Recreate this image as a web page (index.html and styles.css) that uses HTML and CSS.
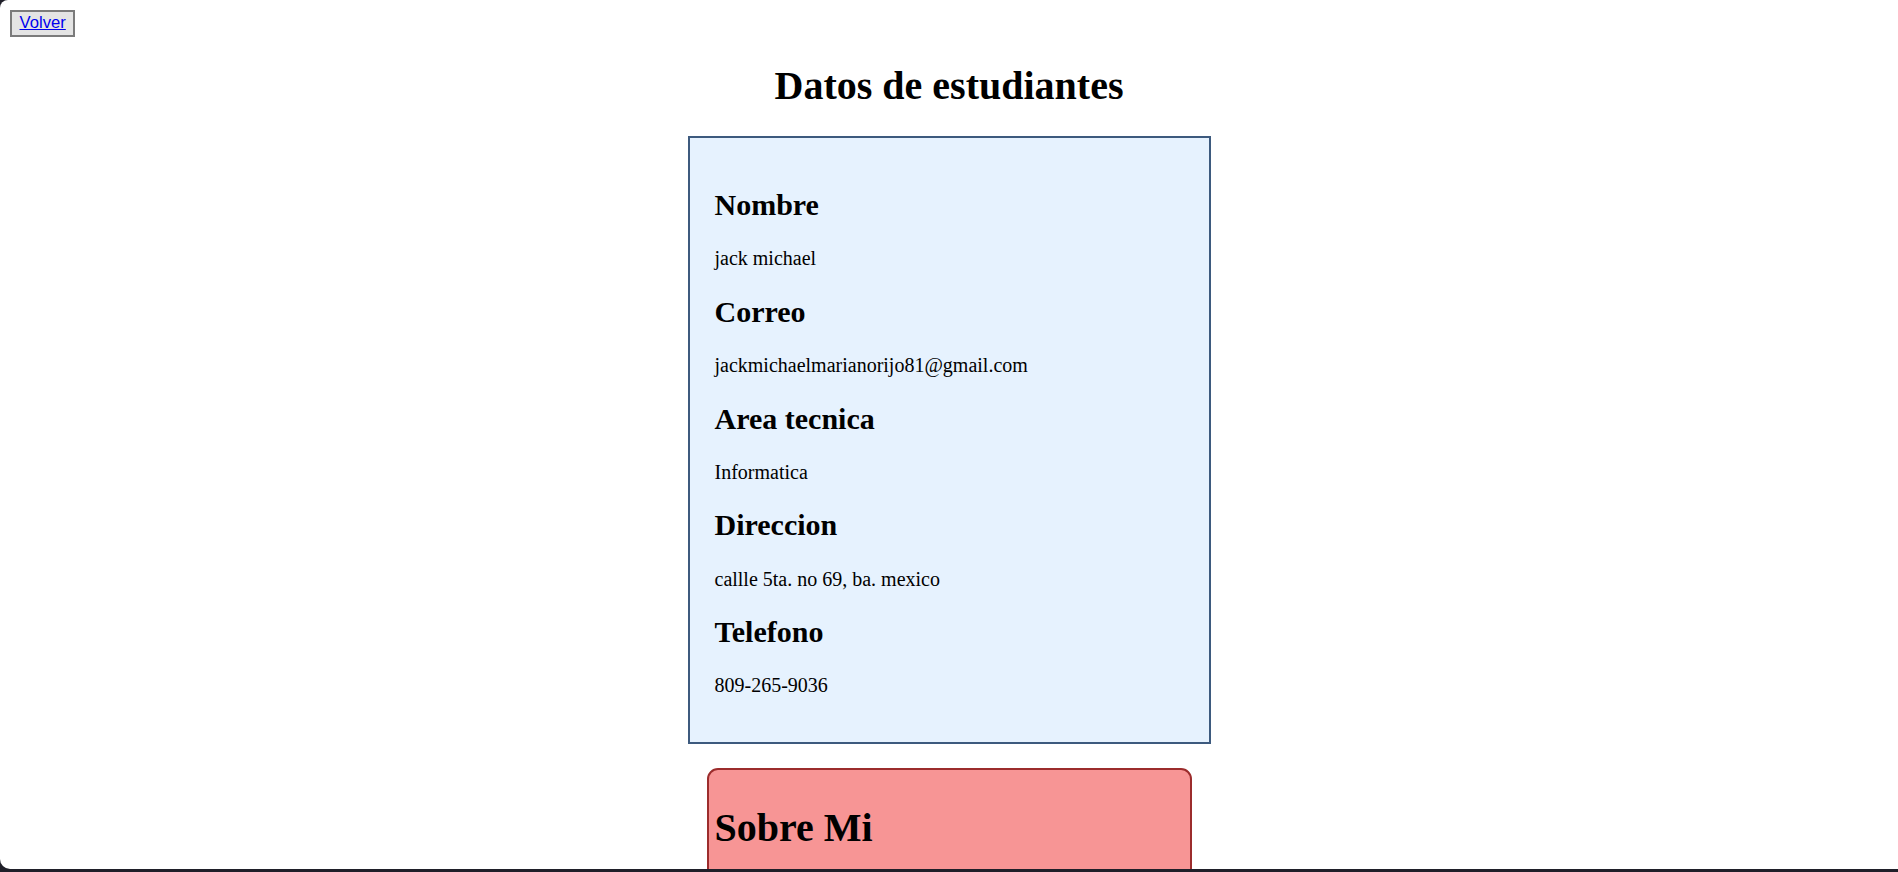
FILE: index.html
```html
<!DOCTYPE html>
<html lang="es">
<head>
<meta charset="utf-8">
<title>Datos de estudiantes</title>
<link rel="stylesheet" href="styles.css">
</head>
<body>
<div class="window">
  <button class="back-btn" type="button"><a href="#" class="back-link">Volver</a></button>
  <h1 class="page-title">Datos de estudiantes</h1>
  <section class="student-card">
    <h2 class="field-label">Nombre</h2>
    <p class="field-value">jack michael</p>
    <h2 class="field-label">Correo</h2>
    <p class="field-value">jackmichaelmarianorijo81@gmail.com</p>
    <h2 class="field-label">Area tecnica</h2>
    <p class="field-value">Informatica</p>
    <h2 class="field-label">Direccion</h2>
    <p class="field-value">callle 5ta. no 69, ba. mexico</p>
    <h2 class="field-label">Telefono</h2>
    <p class="field-value">809-265-9036</p>
  </section>
  <section class="about-card">
    <h1 class="about-title">Sobre Mi</h1>
  </section>
</div>
</body>
</html>
```
FILE: styles.css
```css
html {
  background: #1f1f29;
  height: 100%;
}
body {
  margin: 0;
  font-family: "Liberation Serif", "Times New Roman", serif;
  color: #000;
}
.window {
  height: 869px;
  box-sizing: border-box;
  overflow: hidden;
  background: #fff;
  border-radius: 8px 0 0 10px;
  padding: 10px;
}
.back-btn {
  font-family: "Liberation Sans", Arial, sans-serif;
  font-size: 16.67px;
  line-height: normal;
  padding: 1.25px 7.5px;
  margin: 0;
  border: 2px solid #7b7b7b;
  background: #e4e4e4;
  border-radius: 0;
}
.back-link {
  color: #0000ee;
  text-decoration: underline;
}
.page-title {
  font-size: 40px;
  font-weight: bold;
  text-align: center;
  margin: 26.8px 0;
  line-height: 46px;
}
.student-card {
  box-sizing: border-box;
  width: 523px;
  margin: 0 auto;
  padding: 25px;
  background: #e6f2fe;
  border: 2px solid #3d5a7e;
}
.field-label {
  font-size: 30px;
  font-weight: bold;
  margin: 24.7px 0;
  line-height: 34.5px;
}
.field-value {
  font-size: 20px;
  margin: 20px 0;
  line-height: 23px;
}
.about-card {
  box-sizing: border-box;
  width: 485px;
  min-height: 200px;
  margin: 24px auto 0;
  padding: 8px 6px 5px;
  background: #f79595;
  border: 2px solid #9c2c2c;
  border-radius: 11px;
}
.about-title {
  font-size: 40px;
  font-weight: bold;
  margin: 26.8px 0;
  line-height: 46px;
}
```
